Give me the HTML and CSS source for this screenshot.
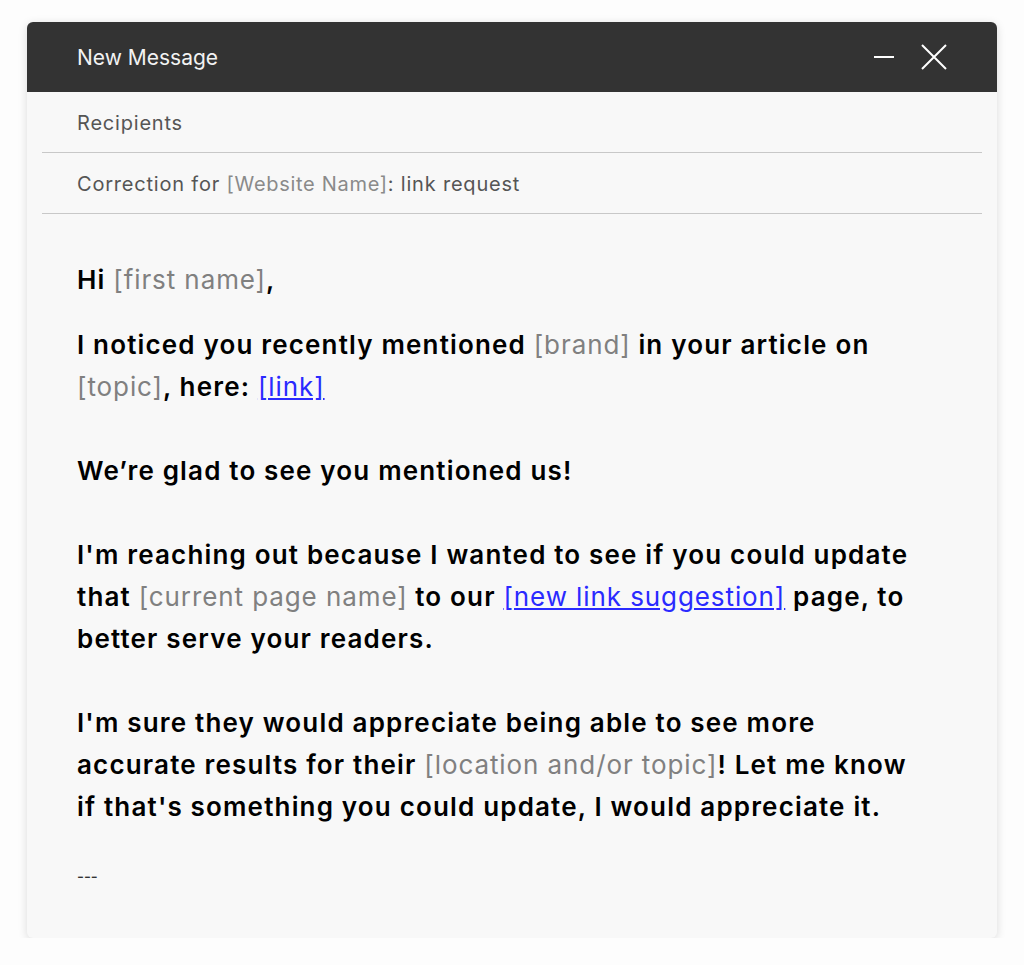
FILE: index.html
```html
<!DOCTYPE html>
<html lang="en">
<head>
    <meta charset="UTF-8">
    <meta name="viewport" content="width=device-width, initial-scale=1.0">
    <title>New Message</title>
    <link rel="stylesheet" href="styles.css">
</head>
<body>

    <div class="window">
        <div class="titlebar">
            <span class="title">New Message</span>
            <div class="controls">
                <svg class="icon" width="22" height="22" viewBox="0 0 22 22"><path d="M1 11H21" stroke="#fff" stroke-width="2"/></svg>
                <svg class="icon" width="26" height="26" viewBox="0 0 26 26"><path d="M1 1L25 25M25 1L1 25" stroke="#fff" stroke-width="2"/></svg>
            </div>
        </div>

        <div class="field">Recipients</div>
        <div class="field">Correction for <span class="ph">[Website Name]</span>: link request</div>

        <div class="content">
            <p class="greet">Hi <span class="ph">[first name]</span>,</p>
            <p>I noticed you recently mentioned <span class="ph">[brand]</span> in your article on <span class="ph">[topic]</span>, here: <a href="#">[link]</a></p>
            <p>We’re glad to see you mentioned us!</p>
            <p>I'm reaching out because I wanted to see if you could update that <span class="ph">[current page name]</span> to our <a href="#">[new link suggestion]</a> page, to better serve your readers.</p>
            <p>I'm sure they would appreciate being able to see more accurate results for their <span class="ph">[location and/or topic]</span>! Let me know if that's something you could update, I would appreciate it.</p>
            <div class="sig">---</div>
        </div>
    </div>

</body>
</html>
```

FILE: styles.css
```css
body {
    margin: 0;
    background-color: #fdfdfd;
    font-family: Inter, "Liberation Sans", sans-serif;
}
.window {
    width: 970px;
    height: 916px;
    margin: 22px auto 0;
    background: #f8f8f8;
    border-radius: 6px;
    box-shadow: 0 2px 10px rgba(0, 0, 0, 0.14);
    overflow: hidden;
}
.titlebar {
    height: 70px;
    background: #333333;
    display: flex;
    align-items: center;
    justify-content: space-between;
    padding: 0 50px;
}
.title {
    color: #f2f2f2;
    font-size: 21px;
}
.controls {
    display: flex;
    align-items: center;
    gap: 26px;
}
.icon {
    display: block;
}
.field {
    margin: 0 15px;
    padding: 0 35px;
    height: 60px;
    line-height: 62px;
    border-bottom: 1px solid #c8c8c8;
    color: #555;
    font-size: 20px;
    letter-spacing: 0.04em;
}
.field .ph {
    color: #8a8a8a;
}
.content {
    padding: 45px 72px 0 50px;
    font-size: 26px;
    line-height: 42px;
    font-weight: 600;
    letter-spacing: 0.045em;
    color: #000;
}
.content p {
    margin: 0 0 42px;
}
.content .greet {
    margin-bottom: 23px;
}
.ph {
    color: #808080;
    font-weight: 400;
    letter-spacing: 0.035em;
}
a {
    color: #2a2aff;
    font-weight: 400;
    letter-spacing: 0.035em;
}
.sig {
    font-size: 15px;
    font-weight: 500;
    letter-spacing: 0;
    line-height: 20px;
    margin-top: -3px;
    color: #333;
}
```
